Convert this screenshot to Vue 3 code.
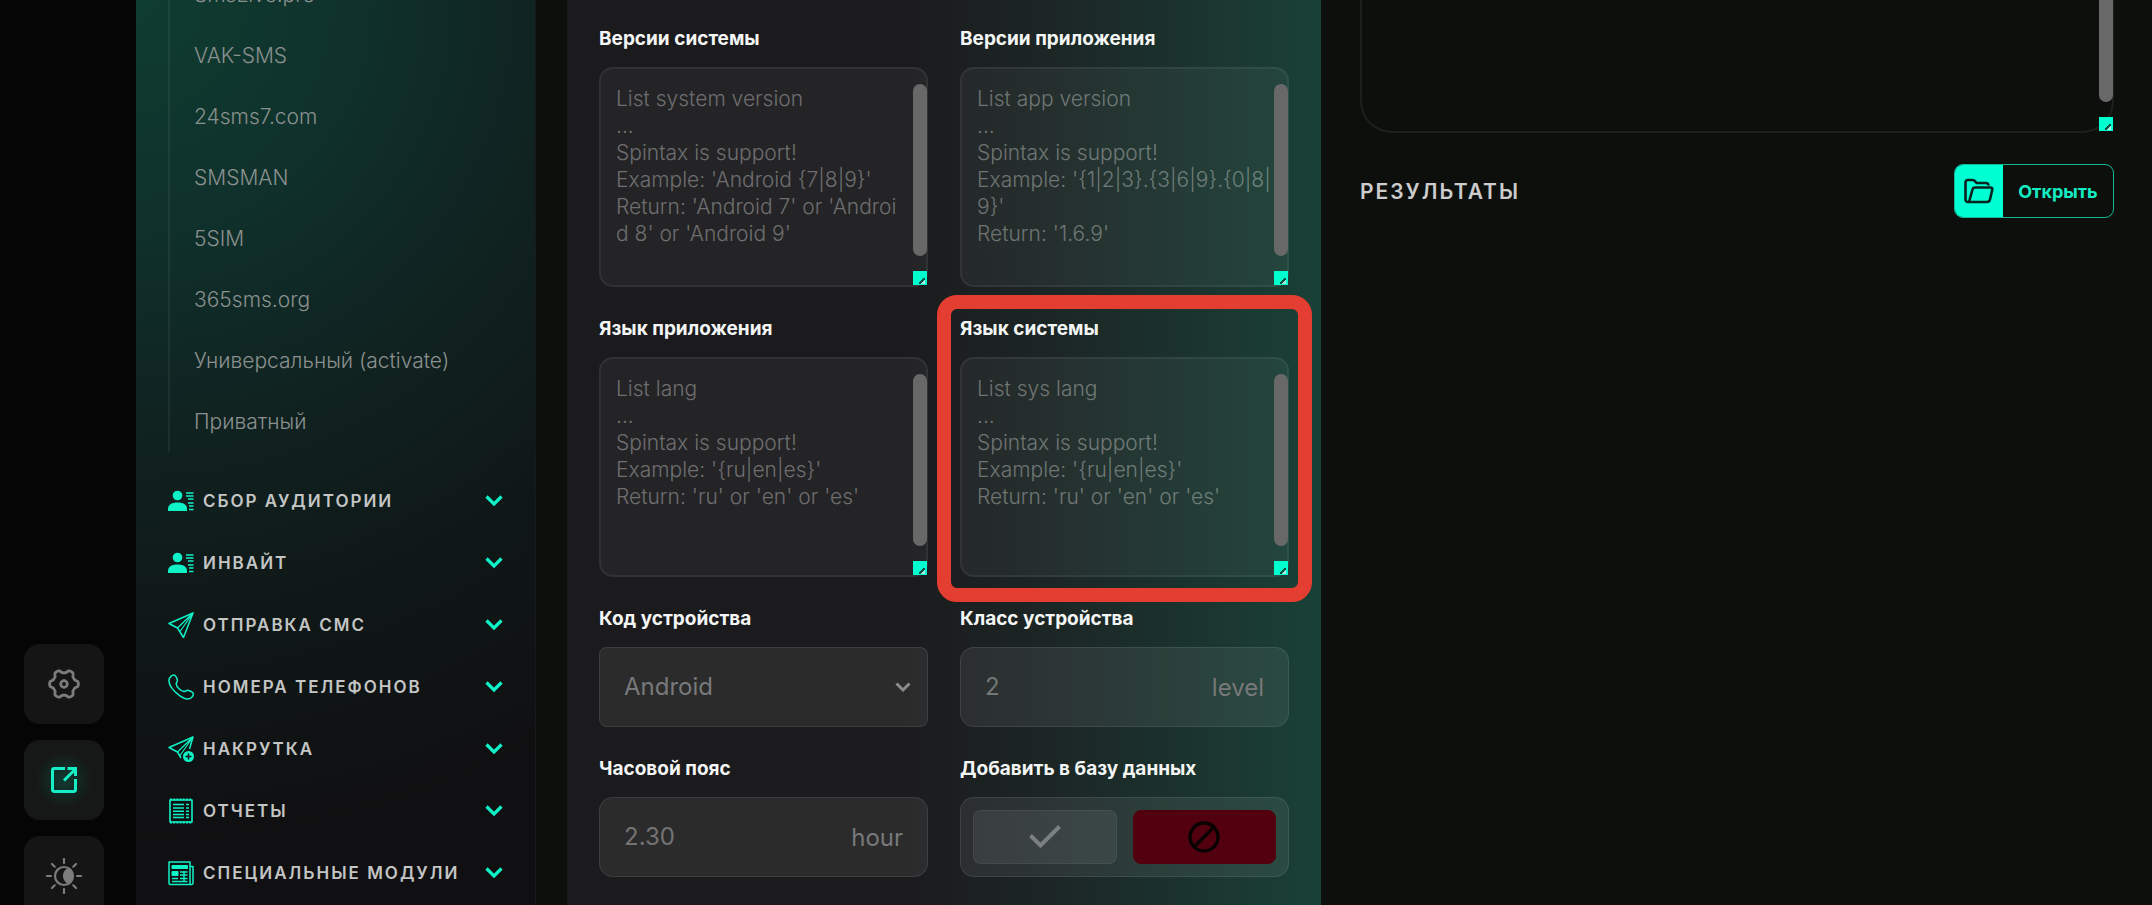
<template>
  <div class="app">
    <aside class="rail">
      <button class="rail-button" type="button" aria-label="Настройки">
        <svg width="32" height="32" viewBox="-16 -16 32 32" fill="none" stroke="currentColor" stroke-width="2.8" stroke-linejoin="round">
          <path :d="gearPath" />
          <circle r="3.3" />
        </svg>
      </button>
      <button class="rail-button active" type="button" aria-label="Открыть в новом окне">
        <svg width="30" height="30" viewBox="0 0 30 30" fill="none" stroke="currentColor" stroke-width="3">
          <path d="M16 3.5H5A1.5 1.5 0 0 0 3.500 5V25A1.500 1.500 0 0 0 5 26.500H25A1.500 1.500 0 0 0 26.500 25V14" />
          <path d="M15 15.500L25 5.500M18.500 3.500H26.500V11" />
        </svg>
      </button>
      <button class="rail-button" type="button" aria-label="Тема">
        <svg width="36" height="36" viewBox="-18 -18 36 36" fill="none" stroke="currentColor" stroke-width="2.2" stroke-linecap="round">
          <circle r="9" />
          <path d="M3.500 -7.500A8 8 0 0 1 3.500 7.500A8.500 8.500 0 0 1 3.500 -7.500Z" fill="currentColor" stroke="none" />
          <path d="M0 -13V-17M0 13V17M-13 0H-17M13 0H17M-9.300 -9.300L-12 -12M9.300 -9.300L12 -12M-9.300 9.300L-12 12M9.300 9.300L12 12" />
        </svg>
      </button>
    </aside>

    <nav class="sidebar">
      <div class="services">
        <a v-for="service in services" :key="service" class="service" href="#">{{ service }}</a>
      </div>

      <button v-for="item in menu" :key="item.title" class="menu-item" type="button">
        <svg class="menu-icon" width="26" height="26" viewBox="0 0 26 26" fill="none" stroke="currentColor" stroke-width="1.5" stroke-linejoin="round">
          <g v-if="item.icon === 'user'">
            <circle cx="9.500" cy="7.500" r="4.800" fill="currentColor" stroke="none" />
            <path d="M0 23V21C0 16.500 4 14.500 9.500 14.500S19 16.500 19 21V23Z" fill="currentColor" stroke="none" />
            <path d="M18 5H25.500M18 8H25.500M20 11H25.500M20 15H25.500M21 18H25.500M21 21.500H25.500" stroke-width="1.400" />
          </g>
          <g v-else-if="item.icon === 'plane'">
            <path d="M25 1L1 11.500L9.500 16L15.500 25.500Z" />
            <path d="M25 1L9.500 16M25 1L12 19.500" stroke-width="1.200" />
          </g>
          <g v-else-if="item.icon === 'phone'">
            <path d="M3 2.300C4.800 0.200 7 0.500 8.200 3L9.300 5.500C10 7.300 8.200 8.300 8.200 10C8.500 13 13 17.300 15.800 17.600C17.500 17.600 18.500 15.800 20.500 16.500L23.800 17.800C26 19 25.800 21.500 23.800 23.300C21 26 16.500 25.500 11 21.200C5 16.500 1.200 11 0.900 7C0.800 5 1.500 3.500 3 2.300Z" />
          </g>
          <g v-else-if="item.icon === 'plane-plus'">
            <path d="M13 22L9.500 16L1 11.500L25 1L21.500 13" />
            <path d="M25 1L9.500 16M25 1L12 19.500" stroke-width="1.200" />
            <circle cx="20.500" cy="20.500" r="5.500" fill="currentColor" stroke="none" />
            <path d="M20.500 17.500V23.500M17.500 20.500H23.500" stroke="#0d1213" />
          </g>
          <g v-else-if="item.icon === 'receipt'">
            <path d="M2 2H24V24H2Z" stroke-width="1.600" />
            <path d="M2 1.500H24M2 24.500H24" stroke-width="2" stroke-dasharray="2 1.200" />
            <path d="M5 6.500H16M18 6.500H21M5 10H16M18 10H21M5 13.200H16M18 13.200H21M5 16.500H16M18 16.500H21M5 19.500H16M18 19.500H21" stroke-width="1.600" />
          </g>
          <g v-else>
            <path d="M1 2H22V24.500H2.500Q1 24.500 1 23ZM22 6.500H25V23Q25 24.500 23.500 24.500H20" />
            <path d="M4 5.500H19.500V8.500H4ZM4 11.500H10V15.500H4Z" fill="currentColor" stroke-width="1" />
            <path d="M12 12H19.500M12 15H19.500M4 18.500H10M12 18.500H19.500M4 21.500H19.500M16 11V22" stroke-width="1.400" />
          </g>
        </svg>
        <span class="menu-title">{{ item.title }}</span>
        <svg class="chevron" width="18" height="12" viewBox="0 0 18 12" fill="none" stroke="currentColor" stroke-width="3.200">
          <path d="M1.500 1.500L9 9L16.500 1.500" />
        </svg>
      </button>
    </nav>

    <section class="panel">
      <div v-for="field in lists" :key="field.id" class="field">
        <label class="label" :for="field.id">{{ field.label }}</label>
        <div class="list-box">
          <textarea :id="field.id" class="list-input" :placeholder="field.placeholder"></textarea>
          <span class="scroll-thumb"></span>
          <span class="resizer"></span>
        </div>
        <div v-if="field.highlighted" class="highlight"></div>
      </div>

      <div class="field">
        <label class="label" for="device-code">Код устройства</label>
        <div class="control select-control">
          <select id="device-code" v-model="deviceCode" class="select">
            <option>Android</option>
            <option>iOS</option>
          </select>
          <svg class="select-arrow" width="16" height="11" viewBox="0 0 16 11" fill="none" stroke="currentColor" stroke-width="3">
            <path d="M1.500 1.500L8 8L14.500 1.500" />
          </svg>
        </div>
      </div>

      <div class="field">
        <label class="label" for="device-class">Класс устройства</label>
        <div class="control">
          <input id="device-class" class="text-input" type="text" placeholder="2" />
          <span class="unit">level</span>
        </div>
      </div>

      <div class="field">
        <label class="label" for="timezone">Часовой пояс</label>
        <div class="control">
          <input id="timezone" class="text-input" type="text" placeholder="2.30" />
          <span class="unit">hour</span>
        </div>
      </div>

      <div class="field">
        <span id="database-label" class="label">Добавить в базу данных</span>
        <div class="control toggle" role="group" aria-labelledby="database-label">
          <button class="toggle-button" type="button" aria-label="Да" @click="addToDatabase = true">
            <svg width="34" height="26" viewBox="0 0 34 26" fill="none" stroke="currentColor" stroke-width="4">
              <path d="M2.500 11.500L12.500 21.500L31.500 2.500" />
            </svg>
          </button>
          <button class="toggle-button" :class="{ off: !addToDatabase }" type="button" aria-label="Нет" @click="addToDatabase = false">
            <svg width="32" height="32" viewBox="0 0 32 32" fill="none" stroke="currentColor" stroke-width="3.400">
              <circle cx="16" cy="16" r="14" />
              <path d="M6 26L26 6" />
            </svg>
          </button>
        </div>
      </div>
    </section>

    <main class="content">
      <div class="log-box">
        <textarea class="log" aria-label="Лог"></textarea>
        <span class="scroll-thumb"></span>
        <span class="resizer"></span>
      </div>
      <div class="results">
        <h2 class="results-title">РЕЗУЛЬТАТЫ</h2>
        <button class="open-button" type="button">
          <span class="open-icon">
            <svg width="30" height="26" viewBox="0 0 30 26" fill="none" stroke="currentColor" stroke-width="2.600" stroke-linejoin="round">
              <path d="M5 24H4Q1.500 24 1.500 21V4.500Q1.500 2 4 2H8.500Q10 2 11 3.200L12.500 5H22Q24.500 5 24.500 7.500" />
              <path d="M5 24L8.500 11.500Q9 9.500 11 9.500H26.500Q28.800 9.500 28.200 12L26 21.500Q25.400 24 23 24Z" />
            </svg>
          </span>
          <span class="open-text">Открыть</span>
        </button>
      </div>
    </main>
  </div>
</template>

<script setup>
import { ref } from 'vue';

const deviceCode = ref('Android');
const addToDatabase = ref(false);

const services = [
  'SmsLive.pro',
  'VAK-SMS',
  '24sms7.com',
  'SMSMAN',
  '5SIM',
  '365sms.org',
  'Универсальный (activate)',
  'Приватный'
];

const menu = [
  { title: 'СБОР АУДИТОРИИ', icon: 'user' },
  { title: 'ИНВАЙТ', icon: 'user' },
  { title: 'ОТПРАВКА СМС', icon: 'plane' },
  { title: 'НОМЕРА ТЕЛЕФОНОВ', icon: 'phone' },
  { title: 'НАКРУТКА', icon: 'plane-plus' },
  { title: 'ОТЧЕТЫ', icon: 'receipt' },
  { title: 'СПЕЦИАЛЬНЫЕ МОДУЛИ', icon: 'news' }
];

const lists = [
  {
    id: 'system-version',
    label: 'Версии системы',
    placeholder: "List system version\n...\nSpintax is support!\nExample: 'Android {7|8|9}'\nReturn: 'Android 7' or 'Androi\nd 8' or 'Android 9'"
  },
  {
    id: 'app-version',
    label: 'Версии приложения',
    placeholder: "List app version\n...\nSpintax is support!\nExample: '{1|2|3}.{3|6|9}.{0|8|\n9}'\nReturn: '1.6.9'"
  },
  {
    id: 'app-lang',
    label: 'Язык приложения',
    placeholder: "List lang\n...\nSpintax is support!\nExample: '{ru|en|es}'\nReturn: 'ru' or 'en' or 'es'"
  },
  {
    id: 'system-lang',
    label: 'Язык системы',
    placeholder: "List sys lang\n...\nSpintax is support!\nExample: '{ru|en|es}'\nReturn: 'ru' or 'en' or 'es'",
    highlighted: true
  }
];

// Six-tooth gear outline
const gearPoints = [];
for (let i = 0; i < 120; i++) {
  const angle = (i / 120) * Math.PI * 2;
  const radius = 12.8 + 1.6 * Math.tanh(2 * Math.cos(6 * angle));
  gearPoints.push(`${(radius * Math.cos(angle)).toFixed(2)} ${(radius * Math.sin(angle)).toFixed(2)}`);
}
const gearPath = `M${gearPoints.join('L')}Z`;
</script>

<style>
body {
  margin: 0;
  background-color: #0d0f0d;
}
</style>

<style scoped>
.app {
  display: grid;
  grid-template-columns: 136px 400px minmax(600px, 785px) 1fr;
  height: 100vh;
  overflow: hidden;
  background-color: #0d0f0d;
  font-family: Inter, "Open Sans", sans-serif;
}

.app * {
  box-sizing: border-box;
}

button,
input,
select,
textarea {
  font-family: inherit;
  margin: 0;
}

button {
  cursor: pointer;
}

/* Rail */
.rail {
  display: flex;
  flex-direction: column;
  align-items: center;
  gap: 16px;
  padding: 644px 8px 0 0;
  background-color: #050505;
}

.rail-button {
  display: flex;
  align-items: center;
  justify-content: center;
  flex-shrink: 0;
  width: 80px;
  height: 80px;
  padding: 0;
  border: none;
  border-radius: 16px;
  background-color: #151515;
  color: #7c7c7c;
}

.rail-button.active {
  background: radial-gradient(circle, #103a31 0, #161817 50%);
  color: #14efc5;
}

/* Sidebar */
.sidebar {
  display: flex;
  flex-direction: column;
  padding: 0 32px;
  border-right: 1px solid #161a19;
  background: radial-gradient(circle at 0 0, #0f3d30 0, #0f312c 220px, #102321 420px, #0f1817 620px, #100f11 860px);
}

.services {
  display: flex;
  flex-direction: column;
  flex-shrink: 0;
  margin: -36px 0 18px;
  padding-left: 24px;
  border-left: 2px solid rgba(255, 255, 255, 0.06);
}

.service {
  font-size: 21px;
  font-weight: 300;
  line-height: 61px;
  color: #8b908f;
  text-decoration: none;
}

.menu-item {
  display: flex;
  align-items: center;
  flex-shrink: 0;
  height: 62px;
  padding: 0;
  border: none;
  background: none;
  color: #0ff2c8;
}

.menu-icon {
  flex-shrink: 0;
  margin-right: 9px;
}

.menu-title {
  flex: 1;
  font-size: 17px;
  font-weight: 600;
  letter-spacing: 2px;
  color: #c4c5c5;
  text-align: left;
  white-space: nowrap;
}

/* Form panel */
.panel {
  display: grid;
  grid-template-columns: repeat(2, minmax(0, 1fr));
  align-content: start;
  gap: 28px 32px;
  margin-left: 31px;
  padding: 25px 32px;
  background: linear-gradient(90deg, #1b1b1d 0, #1b1b1d 45%, #1c2725 65%, #1b332d 82%, #194137 100%);
}

.field {
  position: relative;
  display: flex;
  flex-direction: column;
  gap: 14px;
}

.label {
  font-size: 19px;
  font-weight: 700;
  line-height: 28px;
  color: #f4f6f5;
}

.list-box {
  position: relative;
  display: flex;
}

.list-input {
  width: 100%;
  height: 220px;
  padding: 16px 15px;
  border: 2px solid rgba(255, 255, 255, 0.06);
  border-radius: 14px;
  background-color: rgba(255, 255, 255, 0.045);
  color: #d0d0d0;
  font-size: 21px;
  font-weight: 300;
  line-height: 27px;
  resize: none;
  scrollbar-width: none;
}

.list-input::placeholder,
.text-input::placeholder {
  color: rgba(255, 255, 255, 0.35);
}

.scroll-thumb {
  position: absolute;
  top: 17px;
  right: 1px;
  bottom: 31px;
  width: 14px;
  border-radius: 7px;
  background-color: #686869;
}

.resizer {
  position: absolute;
  right: 1px;
  bottom: 2px;
  width: 14px;
  height: 14px;
  background-color: #00ffce;
}

.resizer::after {
  content: "";
  position: absolute;
  right: 2px;
  bottom: 1px;
  width: 6px;
  height: 6px;
  background: linear-gradient(135deg, transparent 40%, #0b4f44 40%, #0b4f44 64%, #9feedd 64%);
}

.highlight {
  position: absolute;
  inset: -20px -23px -25px;
  border: 14px solid #e43d32;
  border-radius: 20px;
  pointer-events: none;
}

.control {
  position: relative;
  display: flex;
  align-items: center;
  height: 80px;
  border: 1px solid rgba(255, 255, 255, 0.09);
  border-radius: 14px;
  background-color: rgba(255, 255, 255, 0.07);
  color: #78797a;
}

.select-control {
  border-radius: 8px;
}

.select,
.text-input {
  flex: 1;
  min-width: 0;
  height: 100%;
  padding: 0 24px 2px;
  border: none;
  outline: none;
  background: none;
  color: #78797a;
  font-size: 24px;
  font-weight: 400;
}

.select {
  appearance: none;
}

.select option {
  background-color: #1b1b1d;
}

.select-arrow {
  position: absolute;
  right: 16px;
  color: #8b8b8b;
  pointer-events: none;
}

.unit {
  padding-right: 24px;
  font-size: 24px;
}

.toggle {
  gap: 16px;
  padding: 0 12px;
}

.toggle-button {
  display: flex;
  align-items: center;
  justify-content: center;
  flex: 1;
  height: 54px;
  padding: 0;
  border: 1px solid rgba(255, 255, 255, 0.06);
  border-radius: 8px;
  background-color: rgba(255, 255, 255, 0.07);
  color: #7b8180;
}

.toggle-button.off {
  border-color: #520010;
  background-color: #520010;
  color: #080203;
}

/* Content */
.content {
  padding: 0 38px 0 39px;
}

.log-box {
  position: relative;
  display: flex;
}

.log {
  width: 100%;
  height: 133px;
  padding: 16px;
  border: 2px solid #1e201e;
  border-top: none;
  border-radius: 0 0 32px 32px;
  background: none;
  color: #d0d0d0;
  resize: none;
}

.log-box .scroll-thumb {
  top: 0;
  border-radius: 0 0 7px 7px;
}

.results {
  display: flex;
  align-items: center;
  justify-content: space-between;
  margin-top: 31px;
}

.results-title {
  margin: 0;
  font-size: 21px;
  font-weight: 600;
  letter-spacing: 2px;
  color: #cbcccb;
}

.open-button {
  display: flex;
  align-items: stretch;
  width: 160px;
  height: 54px;
  padding: 0;
  overflow: hidden;
  border: 1px solid #12b898;
  border-radius: 9px;
  background: none;
  color: #14edc4;
}

.open-icon {
  display: flex;
  align-items: center;
  justify-content: center;
  width: 48px;
  background-color: #00ffd2;
  color: #08221d;
}

.open-text {
  flex: 1;
  align-self: center;
  font-size: 18px;
  font-weight: 700;
}
</style>
